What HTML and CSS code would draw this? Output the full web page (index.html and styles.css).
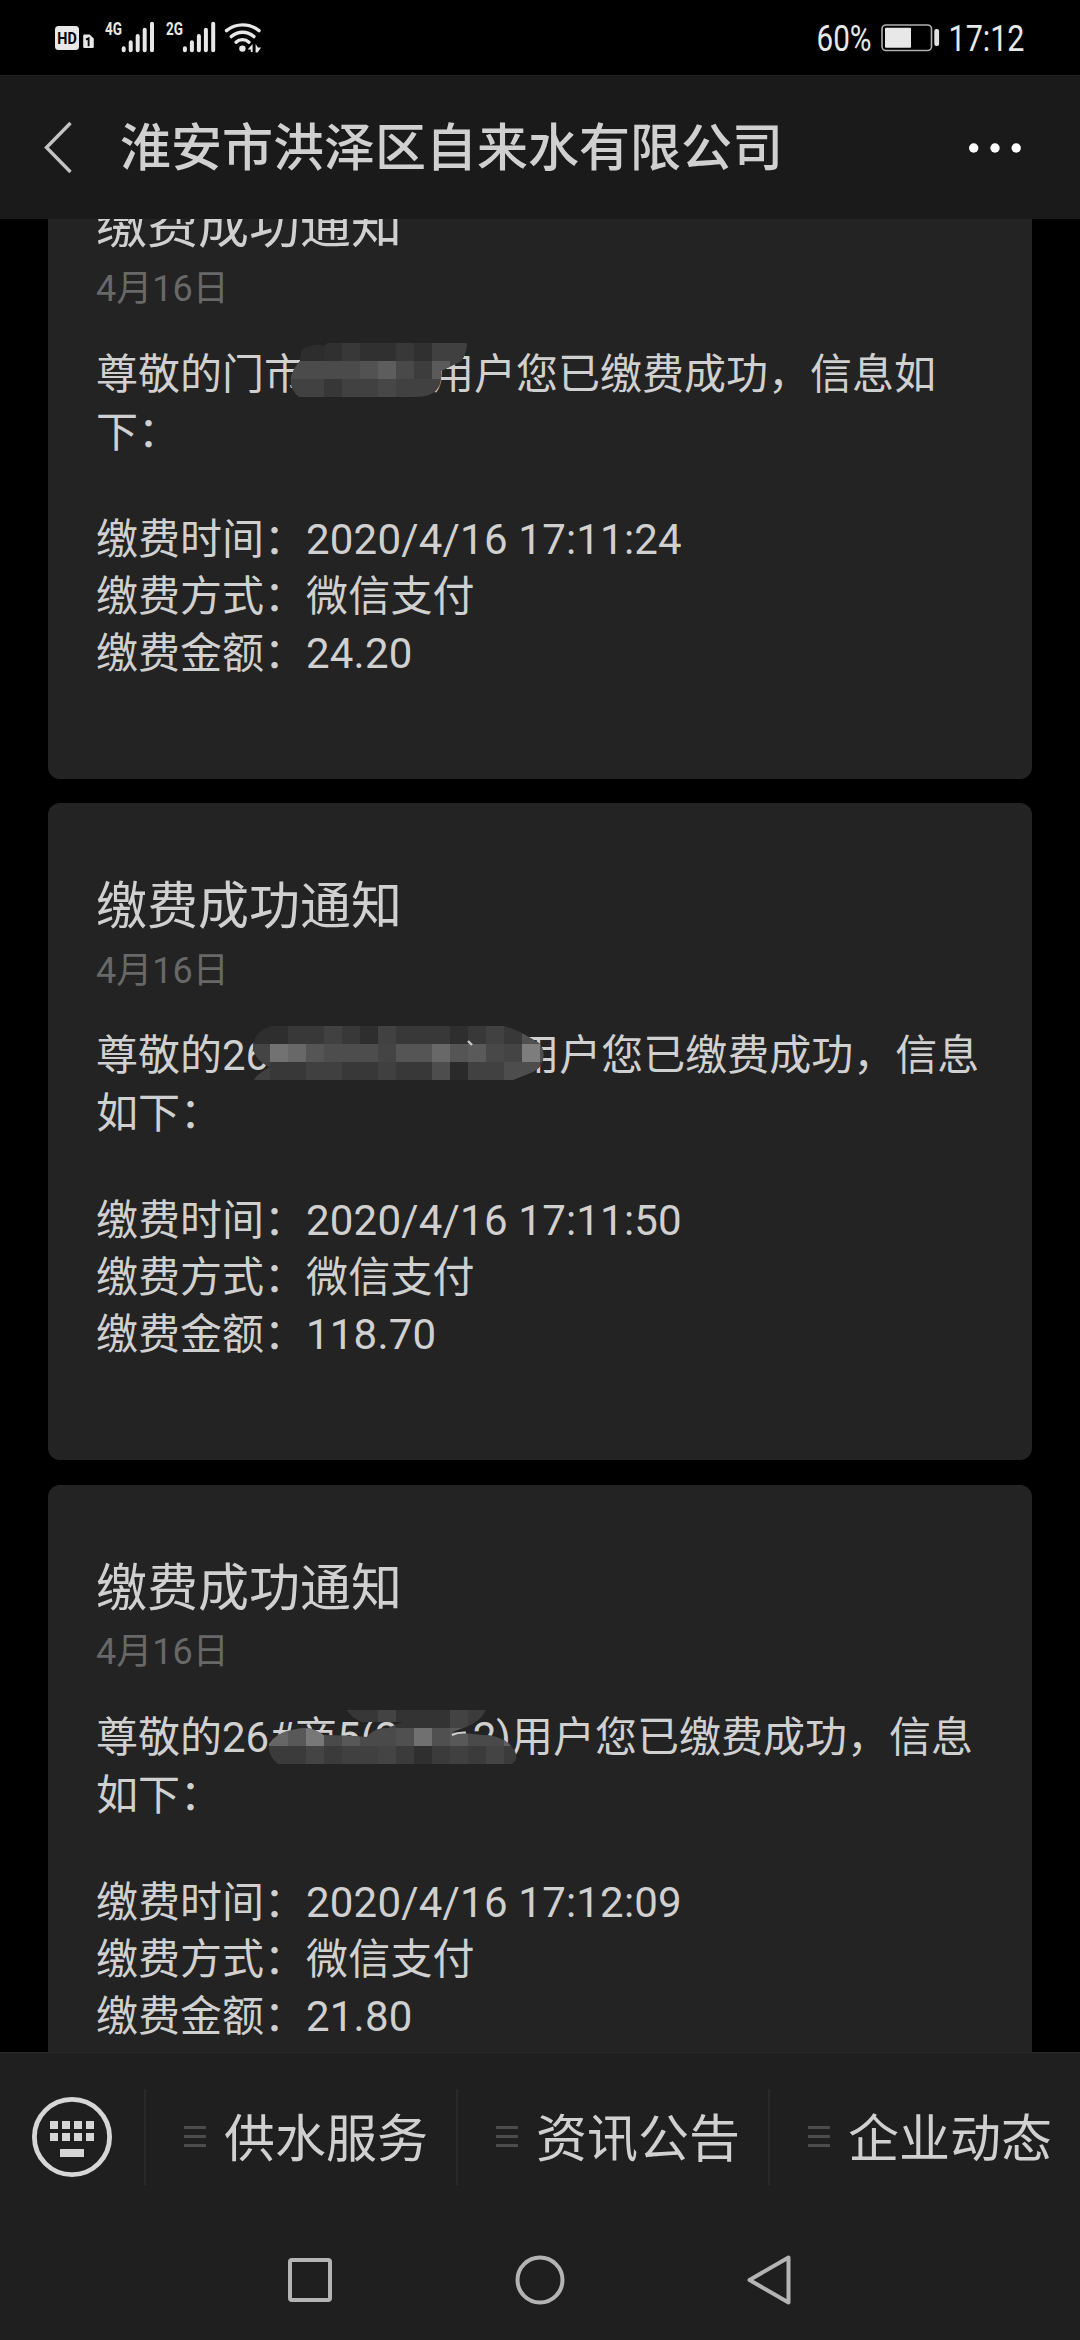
FILE: index.html
```html
<!DOCTYPE html>
<html lang="zh-CN">
<head>
<meta charset="utf-8">
<title>淮安市洪泽区自来水有限公司</title>
<link rel="stylesheet" href="styles.css">
</head>
<body>
<div class="status-bar">
  <svg class="status-left" width="230" height="40" viewBox="40 16 230 40">
    <rect x="55" y="26" width="24" height="24" rx="3.5" fill="#e8e8e8"/>
    <text x="57.3" y="43.8" class="hd" textLength="19.5" lengthAdjust="spacingAndGlyphs">HD</text>
    <path d="M84.5 34.5h5l4.3 4v8.3a1.3 1.3 0 0 1-1.3 1.3h-8a1.3 1.3 0 0 1-1.3-1.3v-11a1.3 1.3 0 0 1 1.3-1.3z" fill="#e8e8e8"/>
    <path d="M86 39.6l2.6-1.4v8" fill="none" stroke="#000" stroke-width="1.8"/>
    <text x="105" y="35" class="net" textLength="17" lengthAdjust="spacingAndGlyphs">4G</text>
    <g stroke="#e8e8e8" stroke-width="4" stroke-linecap="round">
      <path d="M123.7 48.3v2M130.7 42.2v8.1M137.7 36v14.3M144.7 29.8v20.5M152 23.8v26.5"/>
      <path d="M184.9 48.3v2M191.9 42.2v8.1M198.9 36v14.3M205.9 29.8v20.5M213.2 23.8v26.5"/>
    </g>
    <text x="166" y="35" class="net" textLength="17" lengthAdjust="spacingAndGlyphs">2G</text>
    <g fill="none" stroke="#e8e8e8" stroke-width="3.4" stroke-linecap="round">
      <path d="M226.5 30.6a26 26 0 0 1 32.5 0"/>
      <path d="M231.3 36.6a17 17 0 0 1 22.6 0"/>
      <path d="M236 42.2a9.5 9.5 0 0 1 13 0"/>
    </g>
    <circle cx="242.4" cy="48.6" r="3.2" fill="#e8e8e8"/>
    <path d="M252.6 44v8h-1.8v-2.5h-3.2zM255.6 44l2.3 3.4h3.2l-3.5 5.1h-2z" fill="#e8e8e8"/>
  </svg>
  <svg class="status-right" width="215" height="40" viewBox="815 16 215 40">
    <text x="816.5" y="50.8" class="clock" textLength="55" lengthAdjust="spacingAndGlyphs">60%</text>
    <rect x="882" y="25" width="49.5" height="25.5" rx="4" fill="none" stroke="#b0b0b0" stroke-width="1.6"/>
    <rect x="885" y="27.7" width="26" height="20" rx="1" fill="#e8e8e8"/>
    <rect x="934.3" y="29" width="4.8" height="17" rx="2" fill="#e0e0e0"/>
    <text x="948.5" y="50.8" class="clock" textLength="76" lengthAdjust="spacingAndGlyphs">17:12</text>
  </svg>
</div>

<header class="title-bar">
  <svg class="back" width="32" height="56" viewBox="0 0 32 56"><path d="M27.5 3L3.5 27.5l24 24.5" fill="none" stroke="#c4c4c4" stroke-width="3.4"/></svg>
  <h1 class="account">淮安市洪泽区自来水有限公司</h1>
  <svg class="more" width="52" height="10" viewBox="0 0 52 10" fill="#fff"><circle cx="4.7" cy="5" r="4.7"/><circle cx="26" cy="5" r="4.7"/><circle cx="47.2" cy="5" r="4.7"/></svg>
</header>

<main class="feed">
  <article class="card">
    <h2 class="card-title">缴费成功通知</h2>
    <div class="date">4月16日</div>
    <div class="greeting">
      <p>尊敬的门市<span class="hidden-name w1"></span>用户您已缴费成功，信息如下：</p>
      <svg class="mosaic" style="left:192px;top:-7px" width="180" height="60" viewBox="288 338 180 60">
        <clipPath id="c1"><path d="M302 349Q310 343 325 345L328 342H467Q466 356 460 361L441 370Q442 382 438 387Q433 396 414 396H299Q289 388 291 376Q294 366 300 360Z"/></clipPath>
        <g clip-path="url(#c1)" shape-rendering="crispEdges">
          <path fill="#414141" d="M288 342h180v54h-180z"/>
          <path fill="#2d2d2d" d="M288 342h36v18h-36z"/><path fill="#303030" d="M324 342h18v18h-18zM360 342h36v18h-36zM414 342h18v18h-18z"/>
          <path fill="#383838" d="M342 342h18v18h-18zM396 342h18v18h-18z"/><path fill="#404040" d="M432 342h36v18h-36z"/>
          <path fill="#4b4b4b" d="M288 360h72v18h-72z"/><path fill="#525252" d="M360 360h18v18h-18z"/><path fill="#5d5d5d" d="M378 360h18v18h-18z"/><path fill="#494949" d="M396 360h18v18h-18z"/><path fill="#3d3d3d" d="M414 360h18v18h-18z"/><path fill="#5a5a5a" d="M432 360h18v18h-18z"/>
          <path fill="#373737" d="M324 378h18v18h-18z"/><path fill="#474747" d="M378 378h18v18h-18z"/>
        </g>
      </svg>
    </div>
    <dl class="details">
      <div><dt>缴费时间：</dt><dd>2020/4/16 17:11:24</dd></div>
      <div><dt>缴费方式：</dt><dd>微信支付</dd></div>
      <div><dt>缴费金额：</dt><dd>24.20</dd></div>
    </dl>
  </article>

  <article class="card">
    <h2 class="card-title">缴费成功通知</h2>
    <div class="date">4月16日</div>
    <div class="greeting">
      <p>尊敬的26<span class="hidden-name w2"></span>用户您已缴费成功，信息如下：</p>
      <svg class="mosaic" style="left:154px;top:-3px" width="300" height="60" viewBox="250 1024 300 60">
        <clipPath id="c2"><path d="M272 1026H504Q520 1031 527 1036L539 1043Q545 1049 543 1060Q541 1068 533 1072L513 1080H254Q257 1074 270 1067Q253 1060 253 1045Q255 1031 272 1026Z"/></clipPath>
        <g clip-path="url(#c2)" shape-rendering="crispEdges">
          <path fill="#383838" d="M250 1026h300v54h-300z"/>
          <path fill="#2e2e2e" d="M252 1026h36v18h-36zM360 1026h18v18h-18zM450 1026h18v18h-18z"/>
          <path fill="#414141" d="M324 1026h18v18h-18zM378 1026h18v18h-18zM486 1026h18v18h-18z"/>
          <path fill="#444" d="M252 1044h18v18h-18zM378 1044h18v18h-18zM504 1044h18v18h-18z"/>
          <path fill="#727272" d="M270 1044h18v18h-18z"/><path fill="#686868" d="M288 1044h18v18h-18zM432 1044h18v18h-18z"/>
          <path fill="#555" d="M306 1044h18v18h-18zM396 1044h36v18h-36zM450 1044h18v18h-18z"/>
          <path fill="#4d4d4d" d="M324 1044h54v18h-54z"/><path fill="#5a5a5a" d="M468 1044h18v18h-18z"/><path fill="#484848" d="M486 1044h18v18h-18z"/>
          <path fill="#7d7d7d" d="M522 1044h18v18h-18z"/><path fill="#505050" d="M522 1034h28v10h-28zM540 1044h10v18h-10z"/>
          <path fill="#404040" d="M252 1062h18v18h-18zM306 1062h36v18h-36zM378 1062h18v18h-18z"/>
          <path fill="#4d4d4d" d="M432 1062h18v18h-18zM504 1062h36v18h-36z"/><path fill="#2a2a2a" d="M450 1062h18v18h-18z"/><path fill="#414141" d="M468 1062h36v18h-36z"/>
        </g>
        <path d="M468 1041l4 4" stroke="#c8c8c8" stroke-width="2.4"/>
      </svg>
    </div>
    <dl class="details">
      <div><dt>缴费时间：</dt><dd>2020/4/16 17:11:50</dd></div>
      <div><dt>缴费方式：</dt><dd>微信支付</dd></div>
      <div><dt>缴费金额：</dt><dd>118.70</dd></div>
    </dl>
  </article>

  <article class="card">
    <h2 class="card-title">缴费成功通知</h2>
    <div class="date">4月16日</div>
    <div class="greeting">
      <p>尊敬的26#商5(2<span class="hidden-name w3"></span>2)用户您已缴费成功，信息如下：</p>
      <svg class="mosaic" style="left:164px;top:-1px" width="270" height="60" viewBox="260 1708 270 60">
        <clipPath id="c3"><path d="M347 1710H486Q480 1722 466 1727L452 1732L482 1735Q498 1735 508 1743Q518 1751 516 1760L512 1764H278Q268 1757 269 1744Q276 1733 292 1730Q312 1724 322 1735L352 1736L367 1737Q373 1728 388 1728L403 1722H362Q351 1717 347 1710Z"/></clipPath>
        <g clip-path="url(#c3)" shape-rendering="crispEdges">
          <path fill="#3b3b3b" d="M260 1708h270v58h-270z"/>
          <path fill="#373737" d="M342 1710h36v18h-36z"/><path fill="#434343" d="M378 1710h18v18h-18zM450 1710h18v18h-18z"/><path fill="#333" d="M396 1710h54v18h-54z"/>
          <path fill="#666" d="M260 1728h28v18h-28z"/><path fill="#585858" d="M288 1728h18v18h-18zM342 1728h18v18h-18zM450 1728h18v18h-18z"/><path fill="#787878" d="M306 1728h18v18h-18z"/>
          <path fill="#4a4a4a" d="M324 1728h18v18h-18zM360 1728h36v18h-36zM468 1728h36v18h-36z"/><path fill="#505050" d="M396 1728h18v18h-18zM432 1728h18v18h-18z"/><path fill="#707070" d="M414 1728h18v18h-18z"/><path fill="#606060" d="M504 1728h18v18h-18z"/>
          <path fill="#444" d="M306 1746h18v18h-18zM378 1746h18v18h-18zM486 1746h18v18h-18z"/><path fill="#2f2f2f" d="M414 1746h18v18h-18z"/><path fill="#404040" d="M342 1746h36v18h-36zM450 1746h18v18h-18z"/>
        </g>
        <path d="M452 1735q6-3 14-2.5" fill="none" stroke="#d0d0d0" stroke-width="2"/>
      </svg>
    </div>
    <dl class="details">
      <div><dt>缴费时间：</dt><dd>2020/4/16 17:12:09</dd></div>
      <div><dt>缴费方式：</dt><dd>微信支付</dd></div>
      <div><dt>缴费金额：</dt><dd>21.80</dd></div>
    </dl>
  </article>
</main>

<footer class="bottom">
  <div class="menu">
    <div class="keyboard">
      <svg width="80" height="80" viewBox="0 0 80 80" fill="#d6d6d6"><circle cx="40" cy="40" r="37.6" fill="none" stroke="#d6d6d6" stroke-width="4.8"/><path d="M18 24h8v8h-8zM30 24h8v8h-8zM42 24h8v8h-8zM54 24h8v8h-8zM18 36h8v8h-8zM30 36h8v8h-8zM42 36h8v8h-8zM54 36h8v8h-8zM28 52h24v8h-24z"/></svg>
    </div>
    <div class="menu-item"><i class="lines"></i><span>供水服务</span></div>
    <div class="menu-item"><i class="lines"></i><span>资讯公告</span></div>
    <div class="menu-item"><i class="lines"></i><span>企业动态</span></div>
  </div>
  <nav class="system-nav">
    <svg width="50" height="52" viewBox="0 0 50 52"><rect x="5" y="6" width="40" height="40" rx="2" /></svg>
    <svg width="50" height="52" viewBox="0 0 50 52"><circle cx="25" cy="26" r="22.5"/></svg>
    <svg width="50" height="52" viewBox="0 0 50 52"><path d="M43.5 3.5v45L4.5 26z"/></svg>
  </nav>
</footer>
</body>
</html>
```
FILE: styles.css
```css
* { box-sizing: border-box; }
body {
  margin: 0;
  width: 1080px;
  height: 2340px;
  display: flex;
  flex-direction: column;
  overflow: hidden;
  background: #000;
  color: #d0d0d0;
  font-family: Roboto, "Noto Sans CJK SC", sans-serif;
}
h1, h2, p, dl, dd { margin: 0; font-weight: 400; }
svg { display: block; flex: none; }

.status-bar {
  flex: none;
  height: 75px;
  padding: 16px 50px 0 40px;
  display: flex;
  justify-content: space-between;
}
.status-bar text { fill: #e8e8e8; }
.status-bar .hd { font-size: 16.5px; font-weight: 700; fill: #000; }
.net { font-size: 18px; font-weight: 700; }
.clock { font-size: 36px; }

.title-bar {
  flex: none;
  height: 144px;
  padding: 0 59px 0 43px;
  display: flex;
  align-items: center;
  background: #1a1a1a;
  border-top: 1px solid #212121;
}
.account {
  flex: 1;
  margin-left: 45px;
  padding-top: 2px;
  font-size: 51px;
  line-height: 72px;
  font-weight: 500;
}

.feed {
  flex: none;
  height: 1833px;
  padding: 0 48px;
  overflow: hidden;
  display: flex;
  flex-direction: column;
  gap: 24.5px;
}
.card {
  flex: none;
  height: 657px;
  padding: 74px 0 0 48px;
  border-radius: 12px;
  background: #232323;
}
.card:first-child { margin-top: -97.5px; }
.card-title { font-size: 51px; line-height: 60px; }
.date { margin-top: 8.5px; font-size: 36px; line-height: 50px; color: #686868; }
.greeting { position: relative; margin-top: 31.5px; width: 885px; }
.greeting p { font-size: 42px; line-height: 58px; }
.details { margin-top: 49px; font-size: 42px; line-height: 57px; }
.details div { display: flex; }
.details dd { letter-spacing: 0.2px; }
.hidden-name { display: inline-block; height: 1px; }
.w1 { width: 126px; }
.w2 { width: 248px; }
.w3 { width: 74px; }
.mosaic { position: absolute; }

.bottom {
  flex: 1;
  background: #1f1f1f;
  border-top: 1px solid #2a2a2a;
}
.menu {
  height: 167px;
  display: flex;
  align-items: center;
}
.keyboard { flex: none; width: 144px; padding-left: 32px; }
.menu-item {
  flex: none;
  width: 312px;
  height: 96px;
  padding-left: 38px;
  display: flex;
  align-items: center;
  gap: 18px;
  border-left: 2px solid #292929;
  font-size: 51px;
  line-height: 72px;
  white-space: nowrap;
}
.menu-item span { padding-top: 6px; }
.lines {
  width: 22px;
  height: 21px;
  border-top: 3px solid #4c4c4c;
  border-bottom: 3px solid #4c4c4c;
  background: linear-gradient(#4c4c4c, #4c4c4c) center / 100% 3px no-repeat;
}
.system-nav {
  height: 119px;
  display: flex;
  justify-content: center;
  align-items: center;
  gap: 180px;
}
.system-nav svg { fill: none; stroke: #b4b4b4; stroke-width: 4; stroke-linejoin: round; }
```
